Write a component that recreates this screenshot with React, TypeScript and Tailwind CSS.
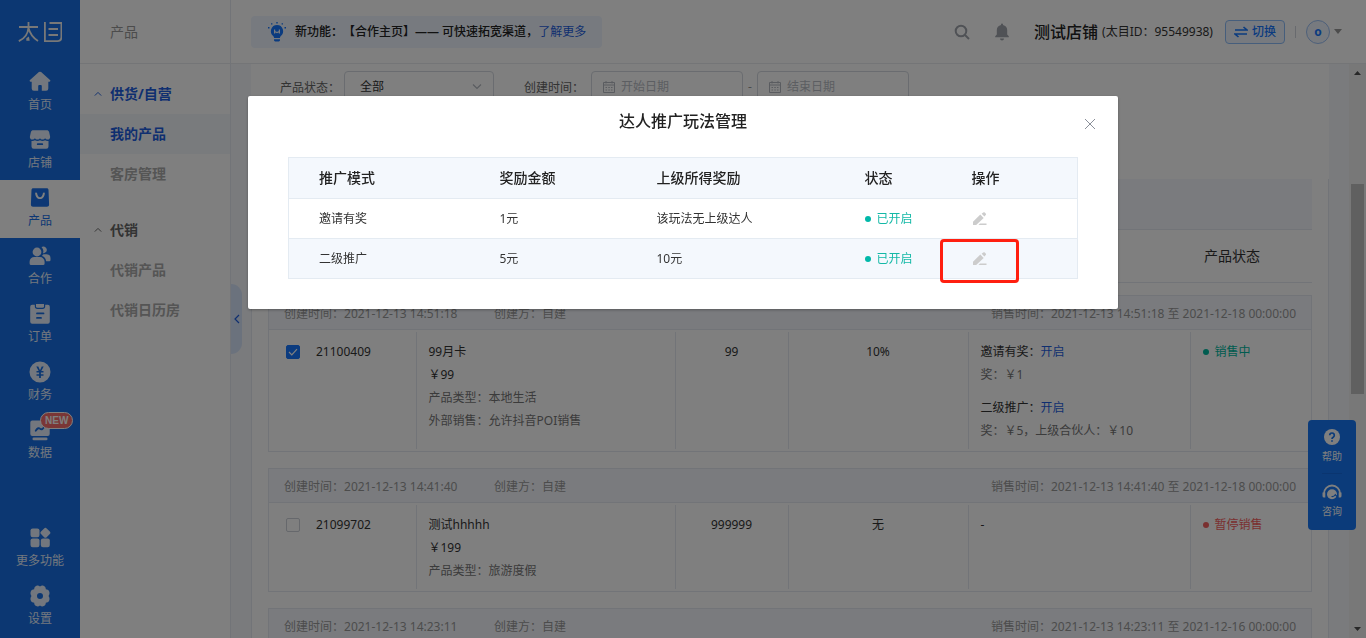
import type { ReactNode } from "react";

type Product = {
  created: string;
  saleTime: string;
  detail?: {
    id: string;
    checked?: boolean;
    name: string;
    price: string;
    info: string[];
    stock: string;
    rate: string;
    promos: { name: string; reward: string }[];
    status: string;
    active?: boolean;
  };
};

const products: Product[] = [
  {
    created: "2021-12-13 14:51:18",
    saleTime: "2021-12-13 14:51:18 至 2021-12-18 00:00:00",
    detail: {
      id: "21100409",
      checked: true,
      name: "99月卡",
      price: "￥99",
      info: ["产品类型：本地生活", "外部销售：允许抖音POI销售"],
      stock: "99",
      rate: "10%",
      promos: [
        { name: "邀请有奖", reward: "奖：￥1" },
        { name: "二级推广", reward: "奖：￥5，上级合伙人：￥10" },
      ],
      status: "销售中",
      active: true,
    },
  },
  {
    created: "2021-12-13 14:41:40",
    saleTime: "2021-12-13 14:41:40 至 2021-12-18 00:00:00",
    detail: {
      id: "21099702",
      name: "测试hhhhh",
      price: "￥199",
      info: ["产品类型：旅游度假"],
      stock: "999999",
      rate: "无",
      promos: [],
      status: "暂停销售",
    },
  },
  {
    created: "2021-12-13 14:23:11",
    saleTime: "2021-12-13 14:23:11 至 2021-12-16 00:00:00",
  },
];

const modes = [
  { name: "邀请有奖", amount: "1元", parent: "该玩法无上级达人" },
  { name: "二级推广", amount: "5元", parent: "10元", marked: true },
];

function Glyph({ children }: { children: ReactNode }) {
  return (
    <svg viewBox="0 0 22 22" className="size-[22px]" fill="currentColor" aria-hidden="true">
      {children}
    </svg>
  );
}

const HomeIcon = (
  <Glyph>
    <path d="M9.900 1.100a1.700 1.700 0 0 1 2.200 0l8.900 7.900c.8.700.3 1.700-.6 1.700h-1.100v6.800a2.200 2.200 0 0 1-2.200 2.200h-4.300v-4.600a1 1 0 0 0-1-1h-1.600a1 1 0 0 0-1 1v4.600h-4.300a2.200 2.200 0 0 1-2.200-2.200v-6.800h-1.100c-.9 0-1.400-1-.6-1.700z" />
  </Glyph>
);
const ShopIcon = (
  <Glyph>
    <path d="M4.300 1.300h13.400c1.200 0 2 .6 2.400 1.700l1 4.400c.3 2-1 3.100-2.400 3.100-1.100 0-2-.5-2.600-1.300-.6.800-1.500 1.300-2.600 1.300s-2-.5-2.500-1.300c-.5.800-1.400 1.300-2.500 1.300s-2-.5-2.600-1.300c-.6.800-1.500 1.300-2.600 1.300-1.400 0-2.700-1.100-2.400-3.100l1-4.400c.4-1.100 1.200-1.700 2.400-1.700z" />
    <path
      fillRule="evenodd"
      d="M2.500 12c1.400.2 2.600-.1 3.400-.7 1.600 1 3.600 1 5.100 0 1.500 1 3.500 1 5.100 0 .8.600 2 .9 3.400.7v5.600a2.200 2.200 0 0 1-2.200 2.200h-12.600a2.200 2.200 0 0 1-2.200-2.200zM8.800 14.200a.9.900 0 0 0 0 1.900h4.400a.9.900 0 0 0 0-1.900z"
    />
  </Glyph>
);
const BagIcon = (
  <Glyph>
    <path
      fillRule="evenodd"
      d="M4.200 1.200h13.600c1 0 1.600.6 1.700 1.600l.6 14.800c0 1.400-.9 2.200-2.100 2.200h-14c-1.200 0-2.100-.8-2.100-2.200l.6-14.800c.1-1 .7-1.600 1.700-1.600zM6.200 6.400c.3 3.400 2.100 5.700 4.800 5.700s4.500-2.300 4.800-5.700c.1-1.200-1.700-1.300-1.900-.1-.3 2.400-1.300 3.900-2.900 3.900s-2.600-1.500-2.900-3.900c-.2-1.200-2-1.100-1.900.1z"
    />
  </Glyph>
);
const PeopleIcon = (
  <Glyph>
    <circle cx="8" cy="7" r="4.400" />
    <path d="M5.500 12h5.400a4.700 4.700 0 0 1 4.700 4.700v1.700a1.500 1.500 0 0 1-1.500 1.500h-12a1.500 1.500 0 0 1-1.500-1.500v-1.700a4.700 4.700 0 0 1 4.900-4.700z" />
    <path d="M12.500 2a3.400 3.400 0 1 1 1.500 6.200 6 6 0 0 0-1.500-6.200zM14.500 9.300h3a4 4 0 0 1 4 4v1.700a1.200 1.200 0 0 1-1.200 1.200h-3.200c-.2-2.600-1.500-4.400-4-5.300.3-.5.500-1 1.400-1.600z" />
  </Glyph>
);
const OrderIcon = (
  <Glyph>
    <path
      fillRule="evenodd"
      d="M3.200 1.800h2.600v1.500a2.600 2.600 0 0 0 2.600 2.600h5.200a2.600 2.600 0 0 0 2.600-2.600v-1.500h2.600a2 2 0 0 1 2 2v15a2 2 0 0 1-2 2h-15.600a2 2 0 0 1-2-2v-15a2 2 0 0 1 2-2zM8 9.500a.9.900 0 0 0 0 1.800h6.500a.9.900 0 0 0 0-1.800zM8 14a.9.900 0 0 0 0 1.800h4a.9.900 0 0 0 0-1.800z"
    />
    <path d="M7 1h8v2.300a1.500 1.500 0 0 1-1.500 1.500h-5a1.500 1.500 0 0 1-1.500-1.500z" />
  </Glyph>
);
const MoneyIcon = (
  <Glyph>
    <path
      fillRule="evenodd"
      d="M11 .5a10.500 10.500 0 1 1 0 21 10.500 10.500 0 0 1 0-21zM7.300 5.600 9.700 10h-2.200v1.500h2.600v1.700h-2.600v1.500h2.600v2.300h1.800v-2.300h2.600v-1.500h-2.600v-1.700h2.600v-1.500h-2.200l2.400-4.400h-2l-1.700 3.600-1.700-3.600z"
    />
  </Glyph>
);
const DataIcon = (
  <Glyph>
    <path
      fillRule="evenodd"
      d="M3.300 1.500h15.400a2 2 0 0 1 2 2v11.500a2 2 0 0 1-2 2h-15.400a2 2 0 0 1-2-2v-11.500a2 2 0 0 1 2-2zM6 11.300c-.7 1.100.7 2 1.500 1 1-1.300 1.600-2.600 2.700-2 1.400 1 3 1.700 4.900-.9.800-1-.7-2-1.400-1-1 1.300-1.600.9-2.700.3-2.400-1.400-4 .5-5 2.600z"
    />
    <rect x="3.500" y="18.500" width="15" height="2.700" rx="1.300" />
  </Glyph>
);
const MoreIcon = (
  <Glyph>
    <rect x="1.500" y="1.400" width="9" height="8.800" rx="2.200" />
    <rect x="1.500" y="11.400" width="9" height="8.800" rx="2.200" />
    <rect x="11.800" y="11.400" width="9" height="8.800" rx="2.200" />
    <rect x="12.400" y="1.800" width="8" height="8" rx="1.800" transform="rotate(45 16.400 5.800)" />
  </Glyph>
);
const GearIcon = (
  <Glyph>
    <path
      fillRule="evenodd"
      d="M7.200.9c1.500-.6 2.700-.2 3.800.7 1.100-.9 2.300-1.300 3.800-.7 1.500.7 2 1.800 2 3.300 1.400.1 2.600.6 3.300 2 .8 1.700.4 3.500-.6 4.800 1 1.300 1.400 3.100.6 4.800-.7 1.400-1.900 1.900-3.300 2 0 1.500-.5 2.600-2 3.300-1.500.6-2.700.2-3.800-.7-1.100.9-2.300 1.300-3.800.7-1.500-.7-2-1.800-2-3.300-1.400-.1-2.600-.6-3.300-2-.8-1.700-.4-3.500.6-4.800-1-1.300-1.400-3.100-.6-4.800.7-1.400 1.900-1.900 3.300-2 0-1.500.5-2.600 2-3.300zM11 8a3 3 0 1 0 0 6 3 3 0 0 0 0-6z"
    />
  </Glyph>
);

const mainNav = [
  { label: "首页", icon: HomeIcon },
  { label: "店铺", icon: ShopIcon },
  { label: "产品", icon: BagIcon, current: true },
  { label: "合作", icon: PeopleIcon },
  { label: "订单", icon: OrderIcon },
  { label: "财务", icon: MoneyIcon },
  { label: "数据", icon: DataIcon, badge: "NEW" },
];
const footNav = [
  { label: "更多功能", icon: MoreIcon },
  { label: "设置", icon: GearIcon },
];

function NavItem({
  label,
  icon,
  current,
  badge,
}: {
  label: string;
  icon: ReactNode;
  current?: boolean;
  badge?: string;
}) {
  return (
    <a
      href="#"
      className={
        "relative flex h-[58px] flex-col items-center pt-[7px] text-xs " +
        (current ? "bg-white text-[#1a6fe8]" : "text-[#e6effc]")
      }
    >
      {icon}
      <span className="mt-[3px] leading-[18px]">{label}</span>
      {badge && (
        <span className="absolute top-0 left-10 rounded-full border border-white bg-[#f56c6c] px-1 font-['Liberation_Sans'] text-[10px] leading-[15px] font-bold text-white">
          {badge}
        </span>
      )}
    </a>
  );
}

function PrimaryNav() {
  return (
    <nav className="flex w-20 shrink-0 flex-col bg-[#186fe4] pb-0.5">
      <a href="#" aria-label="太目" className="flex h-16 items-center justify-center">
        <svg viewBox="0 0 44 20" className="h-5 w-11" fill="none" stroke="#f0f0f0" strokeWidth="1.800" aria-hidden="true">
          <path d="M1 5h19M10.500 0v5.500C10 11.500 7 16.500.8 19.200M10.500 6c1.200 5 4.200 9.500 9.500 13" />
          <path d="M8.300 18.800v-2.500l2.600-1.800.8 4.300z" fill="#f0f0f0" stroke="none" />
          <path d="M26.900 0v19.100h12.600q3.900 0 3.900-4V1H31.500M30.500 7h9.500M30.500 13h9.500" />
        </svg>
      </a>
      {mainNav.map((n) => (
        <NavItem key={n.label} {...n} />
      ))}
      <div className="flex-1" />
      {footNav.map((n) => (
        <NavItem key={n.label} {...n} />
      ))}
    </nav>
  );
}

function Chevron({ className }: { className: string }) {
  return (
    <svg viewBox="0 0 10 6" className={className} fill="none" stroke="currentColor" strokeWidth="1.200" aria-hidden="true">
      <path d="M1 5 5 1l4 4" />
    </svg>
  );
}

function SubNav() {
  const link = "flex h-10 items-center pl-[30px]";
  return (
    <nav className="flex w-[151px] shrink-0 flex-col border-r border-[#e4e8f0] bg-white text-sm font-bold">
      <div className="flex h-16 items-center border-b border-[#e8eaee] pl-[30px] font-normal text-[#999]">产品</div>
      <button className="mt-2.5 flex h-10 items-center gap-2 pl-3.5 text-left text-[#1f5fe0]">
        <Chevron className="h-1.5 w-2" />
        供货/自营
      </button>
      <a href="#" className={link + " bg-[#f3f6fb] text-[#1f5fe0]"}>我的产品</a>
      <a href="#" className={link + " text-[#aaa]"}>客房管理</a>
      <button className="mt-4 flex h-10 items-center gap-2 pl-3.5 text-left text-[#666]">
        <Chevron className="h-1.5 w-2" />
        代销
      </button>
      <a href="#" className={link + " text-[#aaa]"}>代销产品</a>
      <a href="#" className={link + " text-[#aaa]"}>代销日历房</a>
    </nav>
  );
}

function TopBar() {
  return (
    <header className="flex h-16 shrink-0 items-center border-b border-[#e8eaee] bg-white pr-6 pl-5">
      <p className="flex h-8 items-center rounded bg-[#eef5ff] px-4 font-medium text-[#222]">
        <svg viewBox="0 0 20 20" className="mr-2 size-5 text-[#1677ff]" aria-hidden="true">
          <path
            fill="currentColor"
            d="M10 3a6.200 6.200 0 0 1 3.600 11.200c-.4.400-.6.900-.6 1.500v.3H7v-.3c0-.6-.2-1.100-.6-1.500A6.200 6.200 0 0 1 10 3zM7 17.200h6v1.300l-1 1H8l-1-1z"
          />
          <path fill="currentColor" d="M9.300 0h1.400v1.400H9.300zM4 1.200h1.400v1.400H4zM14.600 1.200H16v1.400h-1.400zM1 5h1.500v1.500H1zM17.500 5H19v1.500h-1.500z" />
          <path fill="none" stroke="#eef5ff" strokeWidth="1.200" d="M7.600 7.500v4M12.400 7.500v4M7.600 9.500l2.400 1 2.400-1" />
        </svg>
        <span>新功能：【合作主页】—— 可快速拓宽渠道，</span>
        <a href="#" className="font-normal text-[#1f5fe0]">了解更多</a>
      </p>
      <div className="ml-auto flex items-center">
        <button aria-label="搜索" className="text-[#a0a4ac]">
          <svg viewBox="0 0 16 16" className="size-4" fill="none" stroke="currentColor" strokeWidth="2" aria-hidden="true">
            <circle cx="7" cy="7" r="5.300" />
            <path d="m11 11 4 4" />
          </svg>
        </button>
        <button aria-label="通知" className="ml-6 text-[#a0a4ac]">
          <svg viewBox="0 0 16 18" className="h-[18px] w-4" fill="currentColor" aria-hidden="true">
            <path d="M7 1.500a1 1 0 0 1 2 0v.6c2.600.5 4.200 2.500 4.200 5v4.400l1.600 1.700v1.100H1.200v-1.100l1.600-1.700V7.100c0-2.500 1.600-4.500 4.200-5zM6 15.400h4a2 2 0 0 1-4 0z" />
          </svg>
        </button>
        <strong className="ml-6 text-base font-medium text-[#222]">测试店铺</strong>
        <span className="ml-1 text-[#333]">(太目ID：95549938)</span>
        <button className="ml-3 flex h-6 items-center gap-1 rounded border border-[#8dbcf8] bg-[#eef5ff] px-2 font-medium text-[#1677ff]">
          <svg viewBox="0 0 14 12" className="h-3 w-3.5" fill="none" stroke="currentColor" strokeWidth="1.600" aria-hidden="true">
            <path d="M1 4h12L9.500 1M13 8H1l3.500 3" />
          </svg>
          切换
        </button>
        <span className="ml-2.5 h-3 w-px bg-[#d0d4dc]" />
        <button aria-label="账户" className="ml-2.5 flex items-center gap-1">
          <span className="grid size-6 place-items-center rounded-full border border-[#9cc0f4] bg-[#eef5ff] font-bold text-[#1677ff]">
            o
          </span>
          <svg viewBox="0 0 8 5" className="h-[5px] w-2 text-[#999]" fill="currentColor" aria-hidden="true">
            <path d="M0 0h8L4 5z" />
          </svg>
        </button>
      </div>
    </header>
  );
}

function DateBox({ placeholder }: { placeholder: string }) {
  return (
    <label className="flex h-8 w-[152px] items-center gap-1.5 rounded border border-[#d4d8e0] px-[11px]">
      <svg viewBox="0 0 12 12" className="size-3 shrink-0 text-[#b4b8c0]" fill="none" stroke="currentColor" aria-hidden="true">
        <path d="M.5 1.500h11v10H.5zM.5 4h11M3 0v2.500M9 0v2.500M2.500 6.500h1.500M5.300 6.500h1.500M8 6.500h1.500M2.500 9h1.500M5.300 9h1.500M8 9h1.500" />
      </svg>
      <input
        type="text"
        aria-label={placeholder}
        placeholder={placeholder}
        className="w-full min-w-0 outline-none placeholder:text-[#b8bcc4]"
      />
    </label>
  );
}

function Filters() {
  return (
    <section className="flex h-[115px] shrink-0 items-start bg-white pt-[7px] pl-[29px] text-[#666]">
      <label htmlFor="status" className="leading-[34px]">产品状态：</label>
      <div className="relative ml-1">
        <select
          id="status"
          className="h-8 w-[150px] appearance-none rounded border border-[#d4d8e0] bg-white px-[15px] text-[#333]"
        >
          <option>全部</option>
        </select>
        <Chevron className="pointer-events-none absolute top-3 right-3 h-[7px] w-2.5 rotate-180 text-[#b4b8c0]" />
      </div>
      <span className="ml-[30px] leading-[34px]">创建时间：</span>
      <div className="ml-[7px] flex items-center gap-[5px]">
        <DateBox placeholder="开始日期" />
        <span className="text-center text-[#999]">-</span>
        <DateBox placeholder="结束日期" />
      </div>
    </section>
  );
}

function Dot({ className }: { className: string }) {
  return <span className={"inline-block size-1.5 rounded-full " + className} />;
}

function ProductRow({ d }: { d: NonNullable<Product["detail"]> }) {
  const cell = "border-r border-[#e4e8f0] px-3 pt-2 pb-[7px] align-top leading-[23px]";
  return (
    <div className="py-0.5">
      <table className="w-full table-fixed">
        <colgroup>
          <col className="w-[147px]" />
          <col className="w-[259px]" />
          <col className="w-[113px]" />
          <col className="w-[180px]" />
          <col className="w-[222px]" />
          <col />
        </colgroup>
        <tbody>
          <tr className="text-[#333]">
            <td className="border-r border-[#e4e8f0] px-[17px] pt-2 align-top leading-[23px]">
              <label className="flex items-center gap-4">
                <span className="grid size-3.5 place-items-center">
                  <input
                    type="checkbox"
                    defaultChecked={d.checked}
                    className="peer col-start-1 row-start-1 size-3.5 appearance-none rounded-xs border border-[#ccd0d8] bg-white checked:border-[#1677ff] checked:bg-[#1677ff]"
                  />
                  <svg
                    viewBox="0 0 10 8"
                    className="pointer-events-none invisible col-start-1 row-start-1 h-2 w-2.5 peer-checked:visible"
                    fill="none"
                    stroke="#fff"
                    strokeWidth="1.200"
                    aria-hidden="true"
                  >
                    <path d="m1 4 2.800 2.800L9 1.200" />
                  </svg>
                </span>
                {d.id}
              </label>
            </td>
            <td className={cell}>
              <p>{d.name}</p>
              <p>{d.price}</p>
              {d.info.map((line) => (
                <p key={line} className="text-[#777]">{line}</p>
              ))}
            </td>
            <td className={cell + " text-center"}>{d.stock}</td>
            <td className={cell + " text-center"}>{d.rate}</td>
            <td className={cell}>
              {d.promos.length === 0 && "-"}
              <div className="flex flex-col gap-2.5">
                {d.promos.map((m) => (
                  <div key={m.name}>
                    <p>
                      {m.name}：<a href="#" className="text-[#1f5fe0]">开启</a>
                    </p>
                    <p className="text-[#777]">{m.reward}</p>
                  </div>
                ))}
              </div>
            </td>
            <td className="px-3 pt-2 align-top leading-[23px]">
              <span className={"flex items-center gap-1.5 " + (d.active ? "text-[#00b8a0]" : "text-[#f56060]")}>
                <Dot className={d.active ? "bg-[#00b8a0]" : "bg-[#f56060]"} />
                {d.status}
              </span>
            </td>
          </tr>
        </tbody>
      </table>
    </div>
  );
}

function ProductCard({ p }: { p: Product }) {
  return (
    <article className="border border-[#e4e8f0]">
      <header className="flex h-[34px] items-center border-b border-[#e4e8f0] bg-[#f4f7fc] px-[15px] pt-0.5 text-[#999]">
        <span className="w-[210px]">创建时间：{p.created}</span>
        <span>创建方：自建</span>
        <span className="ml-auto">销售时间：{p.saleTime}</span>
      </header>
      {p.detail && <ProductRow d={p.detail} />}
    </article>
  );
}

function ProductList() {
  return (
    <section className="flex-1 border-x border-[#e4e8f0] bg-white px-4">
      <div className="h-[51px] border-b border-[#e4e8f0] bg-[#f4f7fc]" />
      <div className="flex h-[53px] items-center border-b border-[#e4e8f0] text-sm text-[#333]">
        <span className="ml-auto w-[108px]">产品状态</span>
      </div>
      <div className="mt-3 flex flex-col gap-4">
        {products.map((p) => (
          <ProductCard key={p.created} p={p} />
        ))}
      </div>
    </section>
  );
}

function ScrollTrack() {
  return (
    <div className="flex w-[17px] shrink-0 flex-col items-center bg-[#f1f1f1] py-[7px]">
      <svg viewBox="0 0 7 4" className="h-1 w-[7px]" fill="#505050" aria-hidden="true">
        <path d="M0 4h7L3.500 0z" />
      </svg>
      <div className="mt-[109px] h-[210px] w-[13px] bg-[#c1c1c1]" />
      <svg viewBox="0 0 7 4" className="mt-auto h-1 w-[7px]" fill="#505050" aria-hidden="true">
        <path d="M0 0h7L3.500 4z" />
      </svg>
    </div>
  );
}

function HelpDock() {
  return (
    <aside className="fixed right-2.5 bottom-[108px] flex h-[110px] w-12 flex-col items-center rounded bg-[#1677f4] text-[10px] text-white">
      <button className="flex h-[54px] w-5 flex-col items-center justify-center gap-[3px] border-b border-[#146be0]">
        <svg viewBox="0 0 16 16" className="size-4 shrink-0" aria-hidden="true">
          <circle cx="8" cy="8" r="8" fill="#fff" />
          <path d="M5.700 6.300a2.300 2.300 0 1 1 3.500 2c-.8.500-1.200.8-1.200 1.700M8 11.200v1.600" fill="none" stroke="#1677f4" strokeWidth="1.700" />
        </svg>
        <span className="leading-4 whitespace-nowrap">帮助</span>
      </button>
      <button className="flex h-[54px] flex-col items-center justify-center gap-[3px]">
        <svg viewBox="0 0 20 16" className="h-4 w-5 shrink-0" aria-hidden="true">
          <path d="M2 9.500a8 8 0 0 1 16 0" fill="none" stroke="#fff" strokeWidth="1.800" />
          <path d="M.5 8.500h2.800v5H2a1.500 1.500 0 0 1-1.500-1.500zM16.700 8.500h2.800v3.500a1.500 1.500 0 0 1-1.500 1.500h-1.300z" fill="#fff" />
          <circle cx="10" cy="10.300" r="5" fill="#fff" />
          <path d="M9.500 12.500c1.600.2 3-.5 3.800-1.800l1.700 1.800" fill="none" stroke="#1677f4" strokeWidth="1.200" />
        </svg>
        <span className="leading-4 whitespace-nowrap">咨询</span>
      </button>
    </aside>
  );
}

function PromotionDialog() {
  return (
    <div className="fixed inset-0 flex items-start justify-center bg-black/50 pt-24">
      <div
        role="dialog"
        aria-modal="true"
        aria-labelledby="dialog-title"
        className="relative w-[870px] rounded-xs bg-white px-10 pb-[30px] shadow-[0_1px_3px_rgba(0,0,0,0.3)]"
      >
        <h2 id="dialog-title" className="pt-[13px] pb-6 text-center text-base leading-6 font-medium text-[#222]">
          达人推广玩法管理
        </h2>
        <button aria-label="关闭" className="absolute top-[22px] right-[22px] grid size-3 place-items-center text-[#8a8f99]">
          <svg viewBox="0 0 12 12" className="size-3" fill="none" stroke="currentColor" aria-hidden="true">
            <path d="m1 1 10 10M11 1 1 11" />
          </svg>
        </button>
        <table className="w-full table-fixed border-collapse border border-[#e4ebf2] text-left text-[#333]">
          <colgroup>
            <col className="w-[196px]" />
            <col className="w-[157px]" />
            <col className="w-[208px]" />
            <col className="w-[107px]" />
            <col />
          </colgroup>
          <thead>
            <tr className="h-[41px] border-b border-[#e4ebf2] bg-[#f4f8fd] text-sm text-[#222]">
              <th className="pl-[30px] font-medium">推广模式</th>
              <th className="pl-[15px] font-medium">奖励金额</th>
              <th className="pl-[15px] font-medium">上级所得奖励</th>
              <th className="pl-[15px] font-medium">状态</th>
              <th className="pl-[15px] font-medium">操作</th>
            </tr>
          </thead>
          <tbody>
            {modes.map((m) => (
              <tr key={m.name} className="h-10 border-b border-[#e4ebf2] even:bg-[#f4f8fd]">
                <td className="pl-[30px]">{m.name}</td>
                <td className="pl-[15px]">{m.amount}</td>
                <td className="pl-[15px]">{m.parent}</td>
                <td className="pl-[15px]">
                  <span className="flex items-center gap-1.5 text-[#13b8a6]">
                    <Dot className="bg-[#00b8a9]" />
                    已开启
                  </span>
                </td>
                <td className="pl-[15px]">
                  <div className="relative w-[15px]">
                    <button aria-label={"编辑" + m.name} className="block text-[#ccc]">
                      <svg viewBox="0 0 15 14" className="h-3.5 w-[15px]" fill="currentColor" aria-hidden="true">
                        <path d="M8.300 2.500 11.700 5.900 4.200 13H1V9.800z" />
                        <path d="M11.200.5a1.200 1.200 0 0 1 1.600 0l.9.900a1.200 1.200 0 0 1 0 1.600l-1.300 1.500-2.800-2.700z" />
                        <path d="M8 11.600h6.500v1.500H6.500z" />
                      </svg>
                    </button>
                    {m.marked && (
                      <span className="pointer-events-none absolute -top-[13px] -left-8 h-11 w-[79px] rounded border-3 border-[#ff1f10]" />
                    )}
                  </div>
                </td>
              </tr>
            ))}
          </tbody>
        </table>
      </div>
    </div>
  );
}

export default function App() {
  return (
    <div className="flex h-screen overflow-hidden bg-white font-['Noto_Sans','Noto_Sans_CJK_SC',sans-serif] text-xs [text-spacing-trim:space-all]">
      <PrimaryNav />
      <SubNav />
      <div className="flex min-w-0 flex-1 flex-col">
        <TopBar />
        <div className="flex min-h-0 flex-1">
          <main className="relative flex min-w-0 flex-1 flex-col overflow-hidden bg-[#f4f6fb] px-5">
            <button
              aria-label="收起菜单"
              className="absolute top-[220px] left-0 grid h-[70px] w-[11px] place-items-center rounded-r-xl bg-[#d6e4fb] text-[#1f5fe0]"
            >
              <Chevron className="h-1.5 w-2.5 -rotate-90" />
            </button>
            <Filters />
            <ProductList />
          </main>
          <ScrollTrack />
        </div>
      </div>
      <HelpDock />
      <PromotionDialog />
    </div>
  );
}
